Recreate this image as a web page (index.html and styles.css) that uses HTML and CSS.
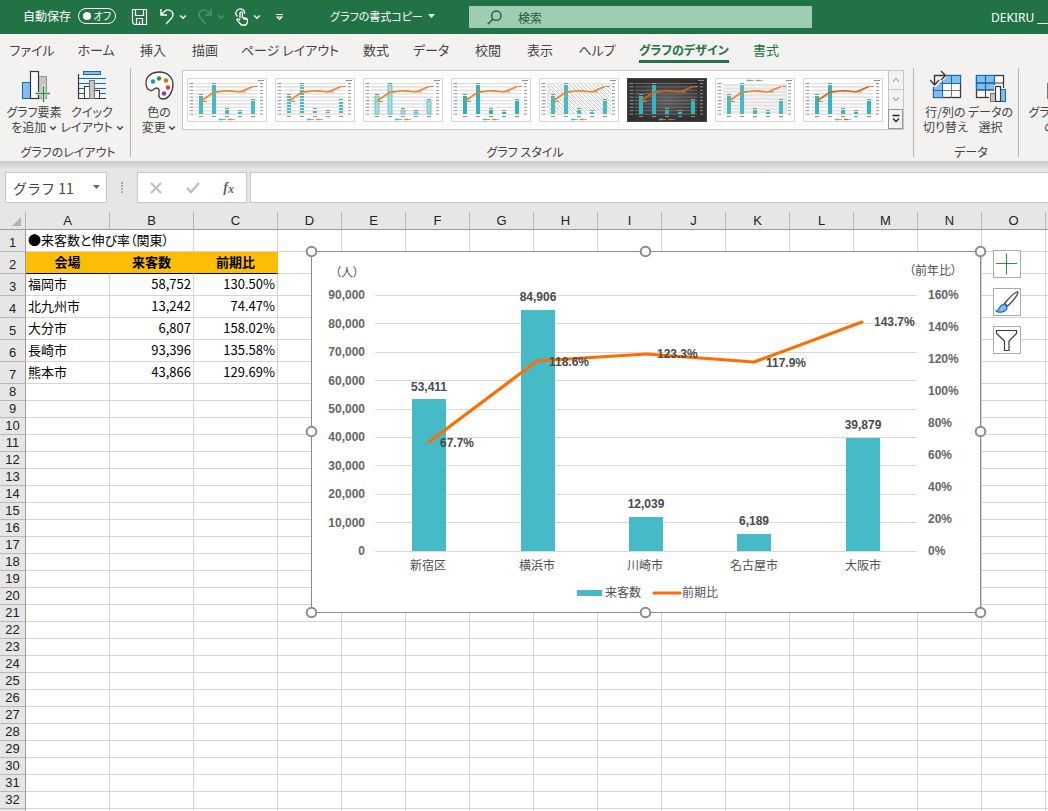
FILE: index.html
```html
<!DOCTYPE html>
<html lang="ja">
<head>
<meta charset="utf-8">
<meta name="viewport" content="width=device-width, initial-scale=1">
<title>グラフの書式コピー</title>
<link rel="stylesheet" href="styles.css">
<script src="script.js" defer></script>
</head>
<body>
<svg class="defs" aria-hidden="true">
  <symbol id="caret" viewBox="0 0 8 8"><path d="M1.2 2.5 4 5.2 6.8 2.5" fill="none" stroke="currentColor" stroke-width="1.5"/></symbol>
</svg>
<div class="app">
  <header class="titlebar">
    <div class="quick">
      <label class="autosave">自動保存
        <input type="checkbox" class="toggle-input">
        <span class="toggle"><span class="knob"></span><span>オフ</span></span>
      </label>
      <button class="icon-btn save" aria-label="保存"><svg width="18" height="18" viewBox="0 0 18 18" fill="none" stroke="#fff" stroke-width="1.2"><path d="M1.500 1.500h14v15H3.500l-2-2zM4.500 1.500v6h8v-6M5.500 16.500v-6h6v6M8.500 13.500v3"/></svg></button>
      <span class="pair">
        <button class="icon-btn" aria-label="元に戻す"><svg width="16" height="18" viewBox="0 0 16 18" fill="none" stroke="#fff" stroke-width="1.4"><path d="M2 1v6h6M2 7l4-4c3-2.500 8-.5 8 3.500 0 2-.8 3-2 4.200L7 16"/></svg></button>
        <button class="icon-btn" aria-label="元に戻す一覧"><svg width="8" height="8"><use href="#caret"/></svg></button>
      </span>
      <span class="pair dim">
        <button class="icon-btn" aria-label="やり直し"><svg width="16" height="18" viewBox="0 0 16 18" fill="none" stroke="currentColor" stroke-width="1.4"><path d="M14 1v6H8M14 7l-4-4C7 .5 2 2.500 2 6.500c0 2 .8 3 2 4.200L9 16"/></svg></button>
        <button class="icon-btn" aria-label="やり直し一覧"><svg width="8" height="8"><use href="#caret"/></svg></button>
      </span>
      <span class="pair">
        <button class="icon-btn" aria-label="タッチ/マウス モード"><svg width="14" height="18" viewBox="0 0 14 18" fill="none" stroke="#fff" stroke-width="1.3"><path d="M2.500 8.500A4.300 4.300 0 1 1 9.500 6M5 10.500V5c0-1.600 2.400-1.600 2.400 0v4.500l4 .8c.8.3 1 .7 1 1.500v2.700L11 17H6.500L2 12.200c-.3-1 .8-1.500 1.600-1L5 12.200M9 9.700V12M10.800 10v2"/></svg></button>
        <button class="icon-btn" aria-label="モード一覧"><svg width="8" height="8"><use href="#caret"/></svg></button>
      </span>
      <button class="icon-btn customize" aria-label="ツール バーのカスタマイズ"><svg width="9" height="8" viewBox="0 0 9 8" fill="none" stroke="#fff" stroke-width="1.100"><path d="M1 1.500h7M2 4h5L4.500 6.500z"/></svg></button>
    </div>
    <button class="doc-title">グラフの書式コピー <svg width="7" height="5" viewBox="0 0 7 5"><path d="M0 0h7L3.500 4z" fill="#fff"/></svg></button>
    <label class="search">
      <svg width="15" height="15" viewBox="0 0 15 15" fill="none" stroke="#185c37" stroke-width="1.4"><circle cx="9.300" cy="5.700" r="4.700"/><path d="M6 9 .7 14.300"/></svg>
      <input type="search" placeholder="検索" aria-label="検索">
    </label>
    <span class="user">DEKIRU __</span>
  </header>

  <nav class="tabs" aria-label="リボン">
    <button>ファイル</button><button>ホーム</button><button>挿入</button><button>描画</button><button>ページ レイアウト</button><button>数式</button><button>データ</button><button>校閲</button><button>表示</button><button>ヘルプ</button><button class="context active"><span>グラフのデザイン</span></button><button class="context">書式</button>
  </nav>

  <section class="ribbon">
    <div class="group layout-group">
      <div class="tools">
        <button class="tool"><svg width="32" height="32" viewBox="0 0 32 32"><rect x="4.500" y="12.500" width="8" height="16" fill="#83beec" stroke="#0f6cbd"/><rect x="20.500" y="6.500" width="8" height="22" fill="#c8c6c4" stroke="#979593"/><rect x="12.500" y="1.500" width="8" height="27" fill="#fff" stroke="#3b3a39" stroke-width="1.200"/><path d="M25.500 15v17M17 23.500h15" stroke="#f3f2f1" stroke-width="3"/><path d="M25.500 16v16M17.500 23.500h14.500" stroke="#309048" stroke-width="1.500"/></svg><span>グラフ要素<br>を追加 <svg width="8" height="8"><use href="#caret"/></svg></span></button>
        <button class="tool"><svg width="32" height="32" viewBox="0 0 32 32"><rect x="7.500" y="1.500" width="17" height="3" fill="#83beec" stroke="#0f6cbd"/><path d="M3 8.500h27M3 13.500h27M3 18.500h27M3 23.500h27" stroke="#0f6cbd"/><path d="M2.500 4v25M2 28.500h28" stroke="#3b3a39" stroke-width="1.200"/><rect x="8.500" y="16.500" width="5" height="12" fill="#fff" stroke="#3b3a39"/><rect x="18.500" y="20.500" width="5" height="8" fill="#fff" stroke="#3b3a39"/><rect x="13.500" y="10.500" width="5" height="18" fill="#c8c6c4" stroke="#797775"/></svg><span>クイック<br>レイアウト <svg width="8" height="8"><use href="#caret"/></svg></span></button>
      </div>
      <h2>グラフのレイアウト</h2>
    </div>
    <div class="group style-group">
      <div class="tools">
        <button class="tool color-tool"><svg width="32" height="32" viewBox="0 0 32 32"><path d="M3 13C3 6 9 2 16.500 2S30 7 30 14.500c0 8-5 14.500-10 14.500-4 0-4.500-3-4-6 .5-3 0-5-2.500-5-2.500 0-3 3-5.500 2.500C5 20 3 17 3 13z" fill="#fff" stroke="#3b3a39" stroke-width="1.300"/><circle cx="10" cy="11.500" r="2.200" fill="#1e8bcd"/><circle cx="16" cy="8.500" r="2.200" fill="#309048"/><circle cx="23" cy="10.500" r="2.200" fill="#d86c00"/><circle cx="25" cy="17.500" r="2.200" fill="#e8323c"/><circle cx="21" cy="23.500" r="2.200" fill="#9a35a8"/></svg><span>色の<br>変更 <svg width="8" height="8"><use href="#caret"/></svg></span></button>
        <div class="gallery">
          <div class="thumbs" id="thumbs"></div>
          <div class="scroller">
            <button class="off" aria-label="上へ"><svg width="8" height="6" viewBox="0 0 8 6"><path d="M1 4.500 4 1.500l3 3" fill="none" stroke="currentColor" stroke-width="1.300"/></svg></button>
            <button class="off" aria-label="下へ"><svg width="8" height="6" viewBox="0 0 8 6"><path d="M1 1.500l3 3 3-3" fill="none" stroke="currentColor" stroke-width="1.300"/></svg></button>
            <button class="more" aria-label="その他"><svg width="8" height="9" viewBox="0 0 8 9"><path d="M.5 1.500h7M1 4.500l3 3 3-3" fill="none" stroke="currentColor" stroke-width="1.300"/></svg></button>
          </div>
        </div>
      </div>
      <h2>グラフ スタイル</h2>
    </div>
    <div class="group data-group">
      <div class="tools">
        <button class="tool"><svg width="32" height="32" viewBox="0 0 32 32"><rect x="3.500" y="5.500" width="27" height="22" fill="#fff" stroke="#3b3a39" stroke-width="1.300"/><path d="M4 6h26v7H13v14H4z" fill="#83beec"/><path d="M3.500 13.500h27M3.500 20.500h27M12.500 6v22M21.500 6v22" stroke="#797775"/><path d="M12.500 13.500h18v-8h-18zM12.500 13.500v14h-9v-14M3.500 20.500h9M21.500 5.500v8" stroke="#0f6cbd" fill="none"/><path d="M0 0h16v8l-5 4-5 5H0z" fill="#f3f2f1"/><path d="M4.500 15V5.500H15M11 1l4.500 4.500L11 10M0 10l4.500 5L9 10" fill="none" stroke="#3b3a39" stroke-width="1.400"/></svg><span>行/列の<br>切り替え</span></button>
        <button class="tool"><svg width="32" height="32" viewBox="0 0 32 32"><rect x="1.500" y="5.500" width="27" height="22" fill="#fff" stroke="#3b3a39" stroke-width="1.300"/><path d="M1 5h19v15H1z" fill="#83beec"/><path d="M1.500 13h27M1.500 20h27M10.500 5v23M19.500 5v23" stroke="#3b3a39"/><path d="M1.500 5.500h18v14.500h-18zM1.500 13h18M10.500 5v15" stroke="#0f6cbd" fill="none" stroke-width="1.200"/><path d="M14 22h5v-7h8v3h5v14H14z" fill="#f3f2f1"/><rect x="15.500" y="23.500" width="5" height="8" fill="#c8c6c4" stroke="#797775"/><rect x="25.500" y="19.500" width="5" height="12" fill="#83beec" stroke="#0f6cbd"/><rect x="20.500" y="16.500" width="5" height="15" fill="#fff" stroke="#3b3a39" stroke-width="1.200"/></svg><span>データの<br>選択</span></button>
      </div>
      <h2>データ</h2>
    </div>
    <div class="group type-group">
      <div class="tools">
        <button class="tool"><svg width="32" height="32" viewBox="0 0 32 32"><rect x="1.500" y="13.500" width="7" height="15" fill="#c8c6c4" stroke="#797775"/><rect x="8.500" y="3.500" width="7" height="25" fill="#fff" stroke="#3b3a39"/><rect x="15.500" y="9.500" width="7" height="19" fill="#83beec" stroke="#0f6cbd"/></svg><span>グラフの種類<br>の変更</span></button>
      </div>
      <h2>種類</h2>
    </div>
  </section>

  <section class="formula-bar">
    <div class="name-box"><input type="text" value="グラフ 11" aria-label="名前ボックス"><button class="icon-btn" aria-label="名前一覧"><svg width="7" height="5" viewBox="0 0 7 5"><path d="M0 0h7L3.500 4z" fill="#666"/></svg></button></div>
    <span class="grip" aria-hidden="true"><i></i><i></i><i></i><i></i></span>
    <div class="entry">
      <button class="icon-btn" aria-label="キャンセル"><svg width="12" height="12" viewBox="0 0 12 12"><path d="M1 1l10 10M11 1 1 11" stroke="#bdbdbd" stroke-width="2"/></svg></button>
      <button class="icon-btn" aria-label="入力"><svg width="14" height="12" viewBox="0 0 14 12"><path d="M1 6l4 4 8-9" fill="none" stroke="#bdbdbd" stroke-width="2.400"/></svg></button>
      <button class="icon-btn fx" aria-label="関数の挿入">f<small>x</small></button>
    </div>
    <input class="formula" type="text" aria-label="数式">
  </section>

  <main class="sheet">
    <table class="grid">
      <colgroup><col class="c-head"><col class="c-wide" span="3"><col class="c-std" span="13"></colgroup>
      <thead><tr><th class="corner"><svg width="9" height="9" viewBox="0 0 9 9"><path d="M9 0v9H0z" fill="#b4b4b4"/></svg></th><th>A</th><th>B</th><th>C</th><th>D</th><th>E</th><th>F</th><th>G</th><th>H</th><th>I</th><th>J</th><th>K</th><th>L</th><th>M</th><th>N</th><th>O</th><th>P</th></tr></thead>
      <tbody id="rows">
        <tr class="tall"><th scope="row">1</th><td colspan="2">●来客数と伸び率（関東）</td></tr>
        <tr class="tall label"><th scope="row">2</th><td>会場</td><td>来客数</td><td>前期比</td></tr>
        <tr class="tall"><th scope="row">3</th><td>福岡市</td><td class="num">58,752</td><td class="num">130.50%</td></tr>
        <tr class="tall"><th scope="row">4</th><td>北九州市</td><td class="num">13,242</td><td class="num">74.47%</td></tr>
        <tr class="tall"><th scope="row">5</th><td>大分市</td><td class="num">6,807</td><td class="num">158.02%</td></tr>
        <tr class="tall"><th scope="row">6</th><td>長崎市</td><td class="num">93,396</td><td class="num">135.58%</td></tr>
        <tr class="tall"><th scope="row">7</th><td>熊本市</td><td class="num">43,866</td><td class="num">129.69%</td></tr>
      </tbody>
    </table>

    <svg class="chart" width="684" height="376" viewBox="304 244 684 376" role="img" aria-label="来客数と前期比のグラフ">
      <rect x="311.500" y="251.500" width="669" height="361" fill="#fff" stroke="#8c8c8c"/>
      <path d="M375 295.500h542M375 323.500h542M375 352.500h542M375 380.500h542M375 409.500h542M375 437.500h542M375 465.500h542M375 494.500h542M375 522.500h542M375 551.500h542" stroke="#d9d9d9"/>
      <path d="M412 399h34v152h-34zM521 310h34v241h-34zM629 517h34v34h-34zM737 534h34v17h-34zM846 438h34v113h-34z" fill="#46bac6"/>
      <polyline points="429,442 537,361 646,354 754,362 862,322" fill="none" stroke="#ff6d00" stroke-width="3" stroke-linecap="round" stroke-linejoin="round"/>
      <g class="axis end"><text x="365" y="299">90,000</text><text x="365" y="328">80,000</text><text x="365" y="356">70,000</text><text x="365" y="385">60,000</text><text x="365" y="413">50,000</text><text x="365" y="441">40,000</text><text x="365" y="470">30,000</text><text x="365" y="498">20,000</text><text x="365" y="527">10,000</text><text x="365" y="555">0</text></g>
      <g class="axis"><text x="928" y="299">160%</text><text x="928" y="331">140%</text><text x="928" y="363">120%</text><text x="928" y="395">100%</text><text x="928" y="427">80%</text><text x="928" y="459">60%</text><text x="928" y="491">40%</text><text x="928" y="523">20%</text><text x="928" y="555">0%</text></g>
      <g class="value mid"><text x="429" y="391">53,411</text><text x="538" y="301">84,906</text><text x="646" y="508">12,039</text><text x="754" y="525">6,189</text><text x="863" y="429">39,879</text></g>
      <g class="value"><text x="440" y="447">67.7%</text><text x="549" y="366">118.6%</text><text x="657" y="358">123.3%</text><text x="766" y="367">117.9%</text><text x="874" y="326">143.7%</text></g>
      <g class="jp mid"><text class="unit" x="347" y="277">（人）</text><text class="unit" x="933" y="275">（前年比）</text><text x="428" y="570">新宿区</text><text x="537" y="570">横浜市</text><text x="645" y="570">川崎市</text><text x="754" y="570">名古屋市</text><text x="863" y="570">大阪市</text><text x="623" y="597">来客数</text><text x="700" y="597">前期比</text></g>
      <path d="M577 590h25v6h-25z" fill="#46bac6"/><path d="M654 593h26" stroke="#ff6d00" stroke-width="3" stroke-linecap="round"/>
      <g fill="#fff" stroke="#8c8c8c" stroke-width="2"><circle cx="311.500" cy="251.500" r="4.800"/><circle cx="645.500" cy="251.500" r="4.800"/><circle cx="980.500" cy="251.500" r="4.800"/><circle cx="311.500" cy="431.500" r="4.800"/><circle cx="980.500" cy="431.500" r="4.800"/><circle cx="311.500" cy="612.500" r="4.800"/><circle cx="645.500" cy="612.500" r="4.800"/><circle cx="980.500" cy="612.500" r="4.800"/></g>
    </svg>
    <div class="chart-tools">
      <button aria-label="グラフ要素"><svg width="26" height="26" viewBox="0 0 26 26"><path d="M12.500 2.500v21M2 12.500h21" stroke="#309048" stroke-width="1.100"/></svg></button>
      <button aria-label="グラフ スタイル"><svg width="26" height="26" viewBox="0 0 26 26"><path d="M10.500 14.500C15 9 20 4 23 3c1.200 0 1 1 .5 2-2 4-6 8.500-10 12z" fill="#fff" stroke="#444" stroke-width="1.300"/><path d="M2 22c2.500 0 3-2 4-4 1.500-3 5-3 6.500-1 1.500 2.500-.5 5-4 5.800-2 .5-5 .5-6.500-.8z" fill="#83beec" stroke="#0f6cbd" stroke-width="1.200"/></svg></button>
      <button aria-label="グラフ フィルター"><svg width="26" height="26" viewBox="0 0 26 26"><path d="M2.500 3.500h20v3L15 14v9.500h-4.500V14l-8-7.500z" fill="#fff" stroke="#3b3a39" stroke-width="1.200"/></svg></button>
    </div>
  </main>
</div>
</body>
</html>
```
FILE: styles.css
```css
* { box-sizing: border-box; }
body {
  margin: 0;
  font-family: "Noto Sans CJK JP", sans-serif;
  font-size: 12px;
  color: #444;
  background: #fff;
}
button, input {
  font: inherit;
  color: inherit;
  margin: 0;
  padding: 0;
  border: 0;
  background: none;
}
.defs { position: absolute; width: 0; height: 0; }
.app {
  height: 100vh;
  display: flex;
  flex-direction: column;
  overflow: hidden;
}

/* Title bar */
.titlebar {
  flex: none;
  height: 34px;
  display: grid;
  grid-template-columns: 330px 139px minmax(120px, 343px) 1fr;
  align-items: center;
  background: #217346;
  color: #fff;
}
.quick { display: flex; align-items: center; gap: 10px; padding-left: 23px; }
.autosave { display: flex; align-items: center; gap: 7px; white-space: nowrap; line-height: 16px; padding-bottom: 2px; }
.toggle-input { position: absolute; opacity: 0; }
.toggle {
  display: flex;
  align-items: center;
  justify-content: space-between;
  width: 38px;
  height: 16px;
  padding: 0 4px;
  border: 1px solid #fff;
  border-radius: 8px;
  font-size: 10px;
  font-feature-settings: "palt";
}
.knob { width: 8px; height: 8px; border-radius: 50%; background: #fff; }
.save { margin-left: 5px; }
.icon-btn { display: flex; align-items: center; justify-content: center; }
.pair { display: flex; align-items: center; gap: 4px; }
.customize { margin-left: 4px; }
.dim { color: #4f9470; }
.doc-title {
  display: flex;
  align-items: center;
  gap: 5px;
  padding-bottom: 2px;
  font-size: 11px;
  white-space: nowrap;
  font-feature-settings: "palt";
}
.search {
  display: flex;
  align-items: center;
  gap: 16px;
  height: 22px;
  padding-left: 18px;
  background: #9fcdb3;
}
.search input { flex: 1; min-width: 0; outline: 0; }
.search input::placeholder { color: #185c37; opacity: 1; }
.user { justify-self: end; white-space: nowrap; font-family: "Noto Sans", sans-serif; }

/* Tabs */
.tabs {
  flex: none;
  height: 32px;
  display: grid;
  grid-template-columns: 64px 64px 50px 54px 116px 56px 54px 60px 44px 70px 104px 60px;
  padding-bottom: 2px;
  background: #f3f2f1;
  font-size: 13px;
  font-feature-settings: "palt";
}
.tabs button { display: flex; align-items: center; justify-content: center; white-space: nowrap; }
.tabs .context { color: #217346; }
.tabs .active { font-weight: 700; font-size: 12px; }
.tabs .active span { margin-top: 3px; line-height: 21px; border-bottom: 3px solid #217346; }

/* Ribbon */
.ribbon {
  flex: none;
  height: 95px;
  display: flex;
  overflow: hidden;
  background: #f3f2f1;
  font-feature-settings: "palt";
}
.group {
  display: flex;
  flex-direction: column;
  flex: none;
  position: relative;
  padding-top: 4px;
}
.group:not(:last-child)::after {
  content: "";
  position: absolute;
  right: 0;
  top: 2px;
  bottom: 4px;
  width: 1px;
  background: #b8b6b4;
}
.group h2 {
  margin: 0;
  font-size: 12px;
  font-weight: 400;
  line-height: 16px;
  text-align: center;
}
.tools { display: flex; height: 74px; }
.layout-group { width: 131px; padding-left: 5px; }
.style-group { width: 783px; padding-left: 5px; }
.data-group { width: 105px; padding-left: 9px; }
.type-group { width: 100px; padding-left: 12px; }
.type-group h2 { width: 62px; }
.tool {
  flex: none;
  width: 58px;
  display: flex;
  flex-direction: column;
  align-items: center;
  line-height: 15px;
  white-space: nowrap;
}
.tool > svg { flex: none; margin-bottom: 2px; }
.color-tool { width: 46px; }
.data-group .tool { width: 45px; }
.type-group .tool { width: 62px; }
.gallery {
  flex: 1;
  height: 60px;
  display: flex;
  margin-right: 10px;
  border: 1px solid #c8c6c4;
  background: #fff;
}
.thumbs { flex: 1; display: flex; align-items: center; gap: 8px; padding-left: 4px; overflow: hidden; }
.thumb { flex: none; width: 80px; height: 44px; }
.thumb svg { display: block; }
.scroller { width: 15px; display: flex; flex-direction: column; }
.scroller button {
  flex: 1;
  display: flex;
  align-items: center;
  justify-content: center;
  border-left: 1px solid #c8c6c4;
  color: #222;
}
.scroller button + button { border-top: 1px solid #c8c6c4; }
.scroller .off { background: #f3f2f1; color: #b0aeac; }
.scroller .more { background: #f3f2f1; border: 1px solid #979593; }

/* Formula bar */
.formula-bar {
  flex: none;
  height: 51px;
  display: flex;
  padding: 11px 0 9px 5px;
  background: linear-gradient(#c8c8c8, #e6e6e6 8px);
}
.name-box, .entry, .formula { border: 1px solid #c6c6c6; background: #fff; }
.name-box { flex: none; width: 102px; display: flex; padding: 0 6px 0 7px; }
.name-box input { flex: 1; min-width: 0; font-size: 14px; outline: 0; }
.grip { flex: none; width: 30px; display: flex; flex-direction: column; align-items: center; justify-content: center; gap: 1px; }
.grip i { width: 2px; height: 2px; background: #aaa; }
.entry { flex: none; width: 110px; display: flex; justify-content: space-between; padding: 0 12px; }
.fx { font: italic 700 14px "Liberation Serif", serif; color: #666; }
.fx small { font-size: 12px; padding-top: 3px; }
.formula { flex: 1; min-width: 0; margin-left: 3px; border-right: 0; outline: 0; }

/* Sheet */
.sheet { flex: 1; position: relative; overflow: hidden; background: #fff; }
.grid {
  width: 1110px;
  table-layout: fixed;
  border-collapse: separate;
  border-spacing: 0;
  color: #000;
  font-size: 13px;
}
.c-head { width: 26px; }
.c-wide { width: 84px; }
.c-std { width: 64px; }
.grid th {
  padding: 0;
  background: #e6e6e6;
  border-right: 1px solid #9b9b9b;
  border-bottom: 1px solid #b8b8b8;
  font: 400 13px/16px "Liberation Sans", sans-serif;
  vertical-align: bottom;
  color: #222;
}
.grid thead th { height: 18px; border-bottom-color: #9b9b9b; border-right-color: #b8b8b8; line-height: 17px; }
.grid .corner { text-align: right; padding: 0 4px 3px 0; line-height: 0; }
.grid td {
  height: 17px;
  padding: 0 2px;
  border-right: 1px solid #d4d4d4;
  border-bottom: 1px solid #d4d4d4;
  line-height: 16px;
  white-space: nowrap;
}
.grid .tall td { height: 22px; padding-bottom: 2px; line-height: 19px; font-feature-settings: "palt"; }
.grid .num { text-align: right; }
.grid .label td:not(:empty) {
  background: #fcbe05;
  border-right-color: #fcbe05;
  border-bottom-color: #000;
  font-weight: 700;
  text-align: center;
}

/* Chart object floating over the cells */
.chart { position: absolute; left: 304px; top: 32px; }
.axis, .value { font: 700 12px "Liberation Sans", sans-serif; fill: #666; }
.value { fill: #4a4a4a; }
.jp { font-size: 12px; fill: #505050; }
.unit { font-feature-settings: "palt"; }
.mid { text-anchor: middle; }
.end { text-anchor: end; }
.chart-tools { position: absolute; left: 993px; top: 38px; display: flex; flex-direction: column; gap: 10px; }
.chart-tools button {
  width: 28px;
  height: 28px;
  display: flex;
  border: 1px solid #ababab;
  background: #fff;
}
```
FILE: script.js
```js
const rows = document.getElementById("rows");
for (const tr of rows.rows) {
  const used = [...tr.cells].reduce((n, c) => n + c.colSpan, 0);
  for (let i = used; i < 17; i++) tr.insertCell();
}
for (let n = 8; n <= 33; n++) {
  const tr = rows.insertRow();
  tr.innerHTML = `<th scope="row">${n}</th>` + "<td></td>".repeat(16);
}

const styles = [
  { bar: "#46bac6", grid: "#e2e2e2", gridWidth: 1.6 },
  { bar: "url(#stripe)", grid: "#e2e2e2", gridWidth: 1.6 },
  { bar: "#a5dbe2", edge: "#46bac6", grid: "#e2e2e2", gridWidth: 1.6 },
  { bar: "#2fb3c0", grid: "#d0d0d0", gridWidth: 0.8 },
  { bar: "#46bac6", grid: "#dcdcdc", gridWidth: 0.8, hatch: true },
  { bar: "#35b5c4", grid: "#777", gridWidth: 0.8, bg: "url(#dark)", ink: "#aaa", line: "#d9620c" },
  { bar: "#46bac6", grid: "#fff", gridWidth: 1, plot: "#e4e4e4", topLegend: true },
  { bar: "#35b5c4", grid: "#e2e2e2", gridWidth: 1.6, line: "#d9620c" }
];
const bars = [[12, 18], [25, 7], [38, 32], [51, 34], [64, 23]];

function thumb(s) {
  const ink = s.ink || "#777", line = s.line || "#f58220";
  const ly = s.topLegend ? 2.5 : 41.5;
  let out = `<rect x=".5" y=".5" width="79" height="43" fill="${s.bg || "#fff"}" stroke="${s.bg ? "#444" : "#d6d6d6"}"/>`;
  if (s.plot) out += `<rect x="8" y="5" width="64" height="31" fill="${s.plot}"/>`;
  if (s.hatch) out += `<rect x="8" y="5" width="64" height="31" fill="url(#hatch)"/>`;
  for (let i = 0; i < 10; i++) {
    const y = 5.5 + i * 3.4;
    out += `<path d="M8 ${y}h62" stroke="${s.grid}" stroke-width="${s.gridWidth}"/>`;
    out += `<path d="M2.500 ${y}h4M73 ${y}h3" stroke="${ink}" stroke-width=".8"/>`;
  }
  for (const [x, y] of bars) {
    out += `<rect x="${x}" y="${y}" width="4" height="${36 - y}" fill="${s.bar}" stroke="${s.edge || "none"}" stroke-width=".7"/>`;
    out += `<path d="M${x} ${y - 1.5}h4M${x} 38.500h4" stroke="${ink}" stroke-width=".8"/>`;
  }
  out += `<path d="M16 23.500h4M29 14h4M42 13h4M55 14h4M67 8.500h4M71 2.500h6" stroke="${ink}" stroke-width=".8"/>`;
  out += `<polyline points="14,23 27,14 40,12.700 53,14 66,8.500" fill="none" stroke="${line}" stroke-width="1.600"/>`;
  out += `<path d="M32 ${ly}h4" stroke="#46bac6" stroke-width="1.500"/><path d="M41 ${ly}h4" stroke="${line}" stroke-width="1.300"/>`;
  out += `<path d="M36 ${ly}h3M45 ${ly}h3" stroke="${ink}" stroke-width=".6"/>`;
  return `<svg width="80" height="44" viewBox="0 0 80 44">${out}</svg>`;
}

document.querySelector(".defs").insertAdjacentHTML("beforeend", `<defs>
  <pattern id="stripe" width="4" height="3" patternUnits="userSpaceOnUse"><path d="M0 1h4" stroke="#46bac6" stroke-width="2"/></pattern>
  <pattern id="hatch" width="4" height="4" patternUnits="userSpaceOnUse"><path d="M0 0l4 4" stroke="#bbb" stroke-width=".8"/></pattern>
  <radialGradient id="dark"><stop offset="0" stop-color="#606060"/><stop offset="1" stop-color="#303030"/></radialGradient>
</defs>`);
const thumbs = document.getElementById("thumbs");
styles.forEach((s, i) => {
  const b = document.createElement("button");
  b.className = "thumb";
  b.setAttribute("aria-label", `スタイル ${i + 1}`);
  b.innerHTML = thumb(s);
  thumbs.append(b);
});
```
